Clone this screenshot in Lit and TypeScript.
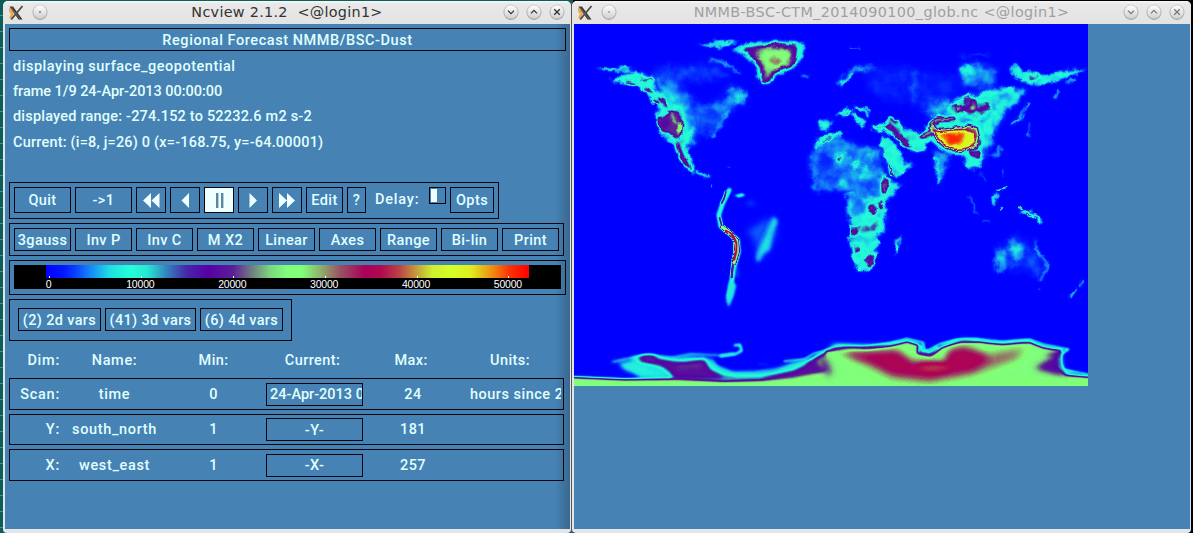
import { LitElement, html, svg, css } from "lit";
import { customElement, property } from "lit/decorators.js";

type Rgb = [number, number, number];

// "3gauss" colour map: position along the scale and its colour
const MAP: [number, Rgb][] = [
  [0, [0, 0, 255]], [0.035, [2, 22, 255]], [0.06, [10, 62, 255]], [0.085, [20, 120, 250]],
  [0.132, [30, 222, 228]], [0.174, [36, 255, 215]], [0.21, [38, 232, 210]], [0.25, [52, 130, 190]],
  [0.29, [70, 40, 170]], [0.335, [86, 0, 165]], [0.387, [92, 30, 150]], [0.42, [110, 110, 132]],
  [0.464, [124, 215, 125]], [0.5, [128, 255, 125]], [0.53, [130, 255, 118]], [0.567, [142, 180, 108]],
  [0.61, [152, 80, 100]], [0.66, [170, 0, 90]], [0.695, [176, 10, 80]], [0.733, [186, 70, 70]],
  [0.764, [196, 150, 60]], [0.8, [206, 240, 45]], [0.836, [212, 255, 40]], [0.878, [222, 240, 30]],
  [0.92, [236, 150, 20]], [0.96, [250, 50, 5]], [1, [255, 0, 0]],
];

function colorAt(v: number): Rgb {
  let i = 1;
  while (i < MAP.length - 1 && MAP[i][0] < v) i++;
  const [a, ca] = MAP[i - 1];
  const [b, cb] = MAP[i];
  const t = (v - a) / (b - a);
  return [0, 1, 2].map((k) => ca[k] + (cb[k] - ca[k]) * t) as Rgb;
}

const table = (ch: number) =>
  Array.from({ length: 65 }, (_, i) => (colorAt(i / 64)[ch] / 255).toFixed(3)).join(" ");

const GRADIENT = `linear-gradient(to right, ${MAP.map(
  ([p, c]) => `rgb(${c.join(",")}) ${(p * 100).toFixed(1)}%`
).join(", ")})`;

// A patch of terrain: height 0..1, blur class, path, and a stroke width for ridges
type Patch = [number, number, string, number?];
const dot = (x: number, y: number, rx: number, ry: number) =>
  `M${x - rx},${y}a${rx},${ry} 0 1,0 ${rx * 2},0a${rx},${ry} 0 1,0 ${-rx * 2},0Z`;

const NORTH_WEST: Patch[] = [
  [0.055, 12, "M230,200L420,190L480,230L350,250L260,240Z"],
  [0.085, 12, "M225,225L300,235L340,280L380,320L440,300L465,255L505,265L520,300L470,335L445,370L415,410L395,405L370,370L350,390L300,330Z"],
  [0.06, 12, "M340,330L440,330L420,390L360,420Z"],
  [0.125, 8, dot(490, 290, 32, 18)],
  [0.1, 4, "M465,335L440,370L410,408", 12],
  [0.15, 4, "M75,205L120,205L170,207L150,212L100,211Z", 6],
  [0.13, 5, "M405,178L440,185L470,200L495,220", 9],
  [0.15, 5, "M368,138L410,122L500,124L460,138L420,146L400,138Z"],
  [0.135, 10, "M230,225L290,270L330,310L356,350L362,430L340,440L300,330Z"],
  [0.175, 5, "M105,246L130,230L175,212L228,222L240,262L290,300L325,335L345,390L342,440L350,480L362,518L330,504L300,434L270,412L247,380L245,345L255,328L228,290L200,264L150,250Z"],
  [0.31, 4, "M160,248L180,250M205,234L226,240M215,268L236,274M235,302L248,310", 9],
  [0.37, 4, "M252,292L275,300L286,324L268,316Z"],
];

const NORTH_WEST_HIGH: Patch[] = [
  [0.39, 4, "M250,350L272,352L285,332L310,338L328,365L324,405L308,418L290,402L262,392L252,374Z"],
  [0.35, 4, dot(272, 372, 14, 14)],
  [0.47, 4, "M292,345L306,368M318,365L315,400", 8],
  [0.56, 3, dot(315, 385, 5, 10)],
  [0.36, 3, "M303,422L320,440L335,475L354,510L328,492L314,460Z"],
  [0.16, 3, "M368,514L385,524L405,532", 9],
  [0.09, 2, dot(412, 558, 4, 5)],
  [0.06, 2, dot(465, 502, 5, 3)],
  [0.17, 5, "M475,152L520,128L600,123L692,130L682,176L655,207L610,224L592,248L565,252L548,226L550,203L528,181L500,156Z", 3],
  [0.34, 4, "M512,146L600,132L668,142L660,192L605,212L586,245L564,243L560,203L537,174Z", 4],
  [0.47, 7, "M545,150L600,140L658,149L652,188L605,206L578,236L569,236L570,200L550,172Z"],
  [0.53, 7, "M562,160L600,152L645,158L635,190L600,202L578,212L572,180Z"],
  [0.6, 7, dot(606, 184, 18, 12)],
  [0.14, 3, "M684,228L702,228", 7],
];

const NORTH_EAST: Patch[] = [
  [0.04, 14, "M100,200L260,200L280,290L200,310L120,280Z"],
  [0.04, 14, "M230,210L390,230L390,300L250,330Z"],
  [0.065, 8, "M255,215L250,310", 14],
  [0.12, 7, "M32,250L60,222L85,204L125,203", 15],
  [0.17, 3, "M33,252L48,242L60,228", 9],
  [0.08, 2, "M60,142L88,142", 4],
  [0.06, 4, "M390,170L475,162", 8],
  [0.1, 12, "M385,195L440,190L500,205L490,265L400,262Z"],
  [0.15, 8, "M388,200L425,196L428,222L395,220Z"],
  [0.15, 6, "M540,200L562,195L580,210L640,222L700,212L772,208L700,238L650,252L600,258L545,226Z"],
  [0.17, 4, "M548,212L600,250L650,246", 6],
  [0.28, 6, dot(608, 236, 16, 8)],
  [0.13, 4, "M735,240L710,248M690,272L674,292", 9],
  [0.1, 12, "M280,310L340,300L370,310L360,350L300,360Z"],
  [0.135, 9, "M460,275L520,262L590,270L560,310L530,330L500,390L478,440L465,480L440,500L420,498L400,460L380,400L300,380L330,345L340,320L360,310L400,290Z"],
  [0.18, 6, "M440,300L480,280L540,272M470,350L500,330L520,310M475,360L480,400", 14],
  [0.12, 4, "M597,308L575,345L545,370", 10],
  [0.11, 3, "M600,372L598,400L585,404", 7],
  [0.11, 5, "M510,440L505,465L480,468", 11],
  [0.2, 5, "M355,318L415,288L450,298L485,320L462,352L405,352L370,342Z", 4],
  [0.36, 3, "M368,314L388,320L410,322L402,300L420,294L436,300L446,328L430,342L405,338L385,334Z", 3],
  [0.42, 3, dot(424, 325, 7, 6)],
  [0.32, 5, "M450,335L475,318", 13],
  [0.1, 8, "M312,445L362,460L350,500L332,560L314,510Z"],
  [0.15, 4, "M320,470L325,520L332,545", 8],
  [0.17, 7, "M395,455L450,465L448,500L425,508L400,480Z"],
  [0.09, 4, "M455,520L465,545M518,512L520,526M500,575L492,600", 6],
];

// Europe, the Middle East and Africa
const AFRICA: Patch[] = [
  [0.12, 6, "M85,80L108,70L128,80L118,107L92,107Z", 3],
  [0.16, 5, dot(103, 88, 13, 12)],
  [0.15, 5, "M135,62L150,48L180,42L186,52L160,62Z", 3],
  [0.3, 4, "M148,58L178,49", 7],
  [0.14, 4, "M195,42L222,38L232,58M190,60L205,78L218,92L222,78L210,72", 11],
  [0.19, 5, "M242,98L262,86L290,88L296,68L322,74L332,92L350,110L372,106L400,120L415,120L405,165L370,168L340,155L312,118L262,110Z"],
  [0.24, 3, "M255,98L280,95", 8],
  [0.085, 9, "M80,130L140,118L160,125L200,150L240,152L268,160L285,235L300,265L280,290L240,310L170,300L140,285L75,292L60,240L60,180Z"],
  [0.055, 9, "M95,170L130,190L120,270L80,250Z"],
  [0.14, 8, dot(155, 190, 20, 18) + dot(225, 235, 13, 24) + dot(160, 265, 9, 14)],
  [0.13, 6, dot(238, 185, 10, 18) + dot(200, 205, 16, 14) + dot(75, 268, 8, 8)],
  [0.15, 4, "M165,292L185,290L195,300L172,302Z"],
  [0.26, 4, dot(152, 186, 9, 7)],
  [0.26, 3, dot(198, 205, 5, 5)],
  [0.17, 4, "M85,150L95,128L125,122L155,118", 10],
  [0.3, 3, "M94,144L108,134L126,126", 6],
  [0.16, 6, "M275,122L300,128L318,150L345,205L375,200L350,225L320,248L300,235L285,200L270,150Z", 0],
  [0.2, 3, "M276,150L292,195L304,222", 5],
  [0.32, 2, "M302,210L312,240", 7],
  [0.19, 4, "M314,246L340,232", 5],
  [0.17, 7, "M270,245L288,240L308,268L336,266L310,295L285,325L288,400L262,430L255,495L230,528L207,530L185,470L180,430L185,390L172,330L168,300L250,310L275,290Z"],
  [0.09, 9, dot(203, 330, 26, 30)],
  [0.19, 3, "M184,395L180,435L192,470L208,528L232,526L252,505L255,470M286,325L282,350", 5],
  [0.35, 6, dot(193, 407, 10, 13) + dot(198, 462, 6, 11) + dot(238, 498, 13, 18)],
  [0.27, 7, "M225,402L250,398L262,375", 14],
  [0.36, 5, dot(249, 342, 8, 15) + dot(274, 334, 7, 15)],
  [0.22, 3, "M240,448L258,436L262,445", 5],
  [0.16, 4, "M313,475L318,440L332,415L326,455L320,475Z", 3],
];

const HIGH_ASIA: Patch[] = [
  [0.38, 3, "M282,96L300,86L325,112L340,125L366,158L348,156L325,140L312,110Z"],
  [0.36, 3, "M300,68L318,84", 7],
  [0.4, 4, "M286,248L296,275L288,298L276,292L275,268Z", 2],
  [0.18, 4, "M390,118L425,75L465,62L500,66L510,85L550,78L580,110L578,150L572,190L545,198L525,180L490,180L450,160L420,140L400,150L388,132Z"],
  [0.46, 3, "M396,124L418,118L430,98L424,84L445,74L490,72", 12],
  [0.52, 3, "M420,96L450,106L490,98L530,92L560,98L568,134L565,156L540,162L520,166L495,170L465,156L445,140Z"],
  [0.86, 5, "M424,96L450,112L492,106L525,102L550,112L558,138L546,155L520,162L490,164L465,150L442,124Z"],
  [0.97, 8, "M445,112L490,112L525,118L512,148L480,150Z"],
  [0.65, 3, "M530,98L552,102L562,128", 8],
  [0.38, 4, "M540,168L572,168L564,190L550,186Z", 3],
];

const SOUTH_WEST: Patch[] = [
  [0.18, 3, "M466,0L446,40L434,75L440,108L462,126L490,148L494,185L482,225L476,260L470,290L464,320", 14],
  [0.33, 2, "M455,5L450,25L442,40M437,84L444,108", 6],
  [0.5, 2, "M446,112L468,128L488,152L490,185L480,218", 13],
  [0.69, 1, "M455,124L474,134L485,158L485,185L479,208", 9],
  [0.8, 1, "M462,128L470,136M483,162L482,182", 4],
  [0.38, 2, "M476,224L472,262", 7],
  [0.15, 5, "M468,270L486,285L478,318L464,350L457,330Z", 4],
  [0.08, 5, "M490,235L492,262", 8],
  [0.19, 3, "M482,16L505,10L514,16L495,22Z", 2],
  [0.055, 8, dot(530, 40, 18, 10)],
  [0.07, 12, "M515,125L560,95L600,80L610,130L580,190L550,215L540,150Z", 8],
  [0.14, 7, "M598,78L614,92L596,130L588,180L568,190L555,218L545,212L548,195L560,165L575,135Z"],
  [0.13, 9, "M160,512L300,505L400,510L430,530L480,550L600,545L660,515L780,500L780,580L200,560Z"],
  [0.15, 5, "M115,516L170,504L220,497L300,502L350,492L440,496L480,490", 7],
  [0.16, 9, "M130,518L175,512L240,540L300,556L260,520L340,500L400,505L430,540L490,562L400,566L200,560L150,540Z"],
  [0.36, 8, "M170,504L230,498L290,512L330,520L392,510L408,538L450,558L560,560L660,540L760,480L790,480L790,570L300,566L290,548L265,530Z"],
  [0.41, 9, "M315,530L380,524M205,506L240,506", 13],
  [0.17, 7, "M412,510L425,532L470,550L540,550L620,538L690,520", 10],
  [0.17, 3, "M630,514L690,508L720,490L780,478", 6],
  [0.17, 4, "M440,498L485,492L503,482L498,464L482,466", 9],
  [0.05, 3, "M555,523L580,523", 7],
  [0.51, 5, "M-20,560L150,568L300,566L450,572L560,570L660,562L740,548L800,530L800,620L-20,620Z"],
  [0.48, 8, "M780,482L745,502L725,515L745,535L800,520L800,482Z"],
];

const ISLANDS: Patch[] = [
  [0.13, 3, "M415,18L428,42L444,74M460,92L480,94", 5],
  [0.14, 4, "M496,15L488,44", 12],
  [0.15, 2, "M510,66L517,56M568,50L574,58M505,0L530,-5", 6],
  [0.19, 3, "M582,66L605,73L622,84L630,96", 13],
  [0.27, 2, "M590,70L602,73M610,80L622,86", 4],
  [0.055, 12, "M495,180L560,130L600,160L650,220L630,270L590,240L500,240Z"],
  [0.115, 8, "M497,178L530,182L522,245L500,245Z", 3],
  [0.125, 8, "M545,140L578,175L570,208L545,195Z", 3],
  [0.12, 4, "M615,150L620,180L648,215L646,245L632,268", 7],
  [0.06, 2, dot(628, 300, 4, 4)],
  [0.14, 3, "M755,280L750,286M738,300L722,320", 7],
];

const SOUTH_POLE: Patch[] = [
  [0.17, 3, "M0,480L100,474L180,460L230,446L280,458L285,485L330,462L380,450L440,447L520,455L600,449L640,463L716,478L690,496L690,520L700,540L775,553", 7],
  [0.5, 6, "M-12,484L100,484L180,470L230,454L266,464L262,490L300,500L335,472L390,458L450,455L520,463L600,457L640,472L700,482L680,496L676,530L710,554L790,562L790,620L-12,620Z"],
  [0.34, 11, "M610,535L690,490L696,545L740,556L690,556Z"],
  [0.36, 8, "M640,495L690,482L690,505Z"],
  [0.34, 5, "M272,468L272,490L300,494L322,474", 7],
  [0.56, 14, "M10,478L110,482L210,478L240,505L345,508L360,478L400,464L440,472L470,490L590,470L570,505L430,560L300,582L180,570L90,525Z", 12],
  [0.61, 12, "M30,484L110,488L200,484L245,518L345,520L360,484L400,474L440,488L470,502L570,482L555,500L430,545L300,570L190,558L115,518Z"],
  [0.68, 12, "M40,488L110,492L200,488L245,522L345,524L362,486L400,478L440,490L480,504L430,538L300,562L190,550L120,515Z"],
  [0.76, 11, dot(310, 532, 50, 8)],
  [0.38, 12, "M-20,515L-5,545", 26],
  [0.56, 9, "M450,576L780,576", 8],
];

const patches = (list: Patch[]) =>
  list.map(([h, blur, d, w]) => {
    const g = Math.round(h * 255);
    const c = `rgb(${g},${g},${g})`;
    const fill = w && !d.endsWith("Z") ? "none" : c;
    return svg`<path class="b${blur}" d=${d} fill=${fill} stroke=${w ? c : "none"} stroke-width=${w ?? 0} stroke-linecap="round" stroke-linejoin="round"></path>`;
  });

@customElement("geo-map")
class GeoMap extends LitElement {
  static styles = css`
    :host { display: block; width: 514px; height: 362px; }
    svg { display: block; overflow: hidden; }
    .b1 { filter: blur(1px); }
    .b2 { filter: blur(1.7px); }
    .b3 { filter: blur(2.5px); }
    .b4 { filter: blur(3.2px); }
    .b5 { filter: blur(4px); }
    .b6 { filter: blur(5px); }
    .b7 { filter: blur(6px); }
    .b8 { filter: blur(7px); }
    .b9 { filter: blur(8px); }
    .b10 { filter: blur(9px); }
    .b11 { filter: blur(10px); }
    .b12 { filter: blur(11px); }
    .b14 { filter: blur(13px); }
  `;
  render() {
    return html`<svg width="514" height="362" viewBox="0 0 514 362">
      <defs>
        <filter id="rough" filterUnits="userSpaceOnUse" x="0" y="0" width="514" height="362" color-interpolation-filters="sRGB">
          <feTurbulence type="fractalNoise" baseFrequency="0.13" numOctaves="2" seed="4" result="w"></feTurbulence>
          <feDisplacementMap in="SourceGraphic" in2="w" scale="8" xChannelSelector="R" yChannelSelector="G" result="d"></feDisplacementMap>
          <feTurbulence type="fractalNoise" baseFrequency="0.09" numOctaves="2" seed="7"></feTurbulence>
          <feColorMatrix type="matrix" values="2 0 0 0 -.5  2 0 0 0 -.5  2 0 0 0 -.5  0 0 0 0 1" result="n"></feColorMatrix>
          <feComposite in="d" in2="n" operator="arithmetic" k1="0.5" k2="0.75" k3="0" k4="0"></feComposite>
        </filter>
        <filter id="coast" filterUnits="userSpaceOnUse" x="0" y="0" width="514" height="362" color-interpolation-filters="sRGB">
          <feTurbulence type="fractalNoise" baseFrequency="0.13" numOctaves="2" seed="4" result="w"></feTurbulence>
          <feDisplacementMap in="SourceGraphic" in2="w" scale="5" xChannelSelector="R" yChannelSelector="G"></feDisplacementMap>
        </filter>
        <filter id="cmap" filterUnits="userSpaceOnUse" x="0" y="0" width="514" height="362" color-interpolation-filters="sRGB">
          <feComponentTransfer>
            <feFuncR type="table" tableValues=${table(0)}></feFuncR>
            <feFuncG type="table" tableValues=${table(1)}></feFuncG>
            <feFuncB type="table" tableValues=${table(2)}></feFuncB>
          </feComponentTransfer>
        </filter>
      </defs>
      <g filter="url(#cmap)">
        <rect width="514" height="362" fill="#000"></rect>
        <g filter="url(#rough)">
          <rect width="514" height="362" fill="#000"></rect>
          <g transform="translate(0 -24) scale(.33333)">${patches(NORTH_WEST)}</g>
          <g transform="translate(256 -24) scale(.33333)">${patches(NORTH_EAST)}</g>
          <g transform="translate(216 71) scale(.33333)">${patches(AFRICA)}</g>
          <g transform="translate(256 166) scale(.33333)">${patches(ISLANDS)}</g>
        </g>
        <g filter="url(#coast)">
          <g transform="translate(0 -24) scale(.33333)">${patches(NORTH_WEST_HIGH)}</g>
          <g transform="translate(216 71) scale(.33333)">${patches(HIGH_ASIA)}</g>
        </g>
        <g transform="translate(0 166) scale(.33333)">${patches(SOUTH_WEST)}</g>
        <g transform="translate(256 166) scale(.33333)">${patches(SOUTH_POLE)}</g>
      </g>
    </svg>`;
  }
}

@customElement("window-frame")
class WindowFrame extends LitElement {
  @property() caption = "";
  @property({ type: Boolean, reflect: true }) inactive = false;
  static styles = css`
    :host { display: flex; flex-direction: column; box-sizing: border-box; height: 532px; background: #e4e5e6; border-radius: 5px 5px 4px 4px; }
    .bar { display: grid; grid-template-columns: 1fr auto 1fr; align-items: center; height: 23px; flex: none;
      background: linear-gradient(#f8f8f8 0, #e8e8e8 12%, #e3e3e3 100%); border-radius: 5px 5px 0 0; }
    .left, .right { display: flex; align-items: center; }
    .left { padding-left: 5px; gap: 8px; }
    .right { justify-content: flex-end; gap: 7px; padding-right: 6px; }
    .title { font: 14.4px/20px "DejaVu Sans", sans-serif; letter-spacing: .28px; color: #333; white-space: pre; margin-top: -2px; }
    :host([inactive]) .title { color: #a0a0a0; letter-spacing: .35px; }
    :host([inactive]) .btn path { stroke: #777; }
    .btn { display: block; width: 16px; height: 17px; }
    .body { flex: 1; margin: 0 1px 4px 2px; background: #4682b4; overflow: hidden; }
  `;
  button(d: string) {
    return html`<svg class="btn" viewBox="0 0 16 17">
      <defs><linearGradient id="g" x1="0" y1="0" x2="0" y2="1"><stop offset="0" stop-color="#fff"></stop><stop offset="1" stop-color="#cfcfcf"></stop></linearGradient></defs>
      <circle cx="8" cy="8.6" r="7.4" fill="#a2a2a2"></circle>
      <circle cx="8" cy="7.9" r="6.9" fill="url(#g)" stroke="#bdbdbd" stroke-width=".6"></circle>
      <path d=${d} fill="none" stroke="#333" stroke-width="1.3"></path>
    </svg>`;
  }
  render() {
    return html`<div class="bar">
        <div class="left">
          <svg width="16" height="16" viewBox="0 0 16 16">
            <path d="M2 2C0 5 1 7 3 9L1 13L4 14L6 8Z" fill="#f0a850"></path>
            <path d="M10 9L14 14L12 15L8 11Z" fill="#e0b060"></path>
            <path d="M1.5 1.5H5L14.5 14.5H10.5Z" fill="#3c3a38"></path>
            <path d="M14.5 1L3.2 14.5" stroke="#4d4a46" stroke-width="1.8"></path>
            <path d="M3 2.5L12 14" stroke="#777" stroke-width=".8"></path>
          </svg>
          ${this.button("M7.4 8H8.6")}
        </div>
        <div class="title">${this.caption}</div>
        <div class="right">
          ${this.button("M5 6.6L8 9.6L11 6.6")}
          ${this.button("M5 9.4L8 6.4L11 9.4")}
          ${this.button("M5.2 5.2L10.8 10.8M10.8 5.2L5.2 10.8")}
        </div>
      </div>
      <div class="body"><slot></slot></div>`;
  }
}

const ICONS: Record<string, string> = {
  rewind: "M8 0V15L0 7.5ZM16.5 0V15L8.5 7.5Z",
  back: "M12 0V15L4.5 7.5Z",
  pause: "M5 0H7.4V15H5ZM10 0H12.4V15H10Z",
  play: "M4.5 0V15L12 7.5Z",
  forward: "M0 0V15L8 7.5ZM8 0V15L16 7.5Z",
};

@customElement("ncview-panel")
class NcviewPanel extends LitElement {
  static styles = css`
    :host { display: flex; flex-direction: column; align-items: flex-start; box-sizing: border-box; height: 505px; padding: 4px 0 0 4px;
      font: 500 14.5px/18px "Roboto", sans-serif; letter-spacing: .4px; color: #e0ffff;
      background: linear-gradient(to right, transparent 550px, rgba(30, 50, 70, .35) 566px); }
    .box { border: 1px solid #06060f; box-sizing: border-box; display: flex; white-space: nowrap; }
    .head { width: 557px; height: 23px; align-items: center; justify-content: center; letter-spacing: .56px; padding-top: 2px; }
    .info { display: grid; grid-template-rows: repeat(4, 25.3px); align-items: center; height: 101px; padding: 3px 0 27px 4px; white-space: pre; letter-spacing: .2px; }
    .info .name { letter-spacing: .52px; }
    .info .frame { letter-spacing: -.04px; }
    .btn { align-items: center; justify-content: center; flex: none; height: 23px; width: 57px; }
    .opts .btn, .vars .btn { padding-top: 2px; }
    .play .btn.txt { padding-top: 1px; }
    .row { gap: 4px; padding: 4px; }
    .play { height: 37px; }
    .play .btn { height: 26px; }
    .btn.icon { width: 30px; }
    .btn.on { background: #f0ffff; }
    .btn.icon svg { fill: #f0ffff; }
    .btn.on svg { fill: #5c86a4; }
    .btn.w37 { width: 37px; }
    .btn.w19 { width: 19px; }
    .btn.w44 { width: 44px; }
    .delay { width: 55px; padding: 4px 0 0 5px; box-sizing: border-box; letter-spacing: .8px; }
    .play .btn.knob { width: 17px; height: 17px; justify-content: flex-start; }
    .knob i { width: 6px; height: 13px; background: #f0ffff; margin-left: 1px; }
    .opts { height: 33px; margin-top: 4px; width: 555px; }
    .scale { height: 35px; width: 557px; margin-top: 4px; padding: 4px; }
    .black { background: #000; width: 547px; height: 24px; }
    .ramp { width: 483px; height: 13px; margin-left: 32px; }
    .ticks { display: grid; grid-template-columns: repeat(6, 91.9px); margin-left: -11.5px; margin-top: -2px; color: #fff; font: 10.5px/12px "Liberation Sans", sans-serif; letter-spacing: -.2px; text-align: center; }
    .ticks div::before { content: ""; display: block; width: 1px; height: 2px; background: #fff; margin: 0 auto; position: relative; left: 1px; }
    .vars { height: 42px; margin-top: 4px; padding: 8px; gap: 4px; width: 283px; letter-spacing: .35px; }
    .vars .btn { width: 83px; }
    .vars .btn.wide { width: 91px; }
    .dim { display: grid; grid-template-columns: 50px 109px 97px 97px 100px 98px; align-items: center; width: 555px; box-sizing: border-box; padding: 2px 0 0 1px; text-align: center; white-space: nowrap; }
    .dim > :first-child { text-align: right; letter-spacing: .75px; }
    .dim > :nth-child(2) { letter-spacing: .65px; }
    .dim > :nth-child(3) { padding-right: 8px; }
    .dim.labels { height: 37px; }
    .dim.labels > :nth-child(n + 4) { padding-right: 4px; }
    .dim.line { height: 32px; border: 1px solid #06060f; padding: 0; margin-bottom: 4px; }
    .dim.line > :not(.box) { padding-top: 1px; }
    .dim.line.short { height: 31px; }
    .dim .btn { width: 97px; overflow: hidden; padding-top: 2px; }
    .dim .btn.long { justify-content: flex-start; padding-left: 3px; letter-spacing: 0; }
    .units { text-align: left; padding-left: 7px; overflow: hidden; letter-spacing: .5px; }
  `;
  icon(name: string, on = false) {
    return html`<div class="box btn icon ${on ? "on" : ""}"><svg width="17" height="15" viewBox="0 0 17 15"><path d=${ICONS[name]}></path></svg></div>`;
  }
  render() {
    return html`
      <div class="box head">Regional Forecast NMMB/BSC-Dust</div>
      <div class="info"><div class="name">displaying surface_geopotential</div><div class="frame">frame 1/9 24-Apr-2013 00:00:00</div><div>displayed range: -274.152 to 52232.6 m2 s-2</div><div>Current: (i=8, j=26) 0 (x=-168.75, y=-64.00001)</div></div>
      <div class="box row play">
        <div class="box btn txt">Quit</div><div class="box btn txt">-&gt;1</div>
        ${this.icon("rewind")}${this.icon("back")}${this.icon("pause", true)}${this.icon("play")}${this.icon("forward")}
        <div class="box btn txt w37">Edit</div><div class="box btn txt w19">?</div>
        <div class="delay">Delay:</div><div class="box btn knob"><i></i></div>
        <div class="box btn txt w44">Opts</div>
      </div>
      <div class="box row opts">
        ${["3gauss", "Inv P", "Inv C", "M X2", "Linear", "Axes", "Range", "Bi-lin", "Print"].map((t) => html`<div class="box btn">${t}</div>`)}
      </div>
      <div class="box scale"><div class="black">
        <div class="ramp" style="background:${GRADIENT}"></div>
        <div class="ticks">${[0, 10000, 20000, 30000, 40000, 50000].map((n) => html`<div>${n}</div>`)}</div>
      </div></div>
      <div class="box vars">
        <div class="box btn">(2) 2d vars</div><div class="box btn wide">(41) 3d vars</div><div class="box btn">(6) 4d vars</div>
      </div>
      <div class="dim labels"><div>Dim:</div><div>Name:</div><div>Min:</div><div>Current:</div><div>Max:</div><div>Units:</div></div>
      <div class="dim line"><div>Scan:</div><div>time</div><div>0</div><div class="box btn long">24-Apr-2013 0</div><div>24</div><div class="units">hours since 2</div></div>
      <div class="dim line short"><div>Y:</div><div>south_north</div><div>1</div><div class="box btn">-Y-</div><div>181</div><div></div></div>
      <div class="dim line"><div>X:</div><div>west_east</div><div>1</div><div class="box btn">-X-</div><div>257</div><div></div></div>
    `;
  }
}

@customElement("app-root")
class AppRoot extends LitElement {
  static styles = css`
    :host { display: flex; box-sizing: border-box; width: 1193px; height: 533px; padding: 1px 0 0 3px; overflow: hidden;
      background:
        linear-gradient(to right, transparent 573px, #000 573px),
        repeating-linear-gradient(#0b5f58 0 15px, #4a9088 15px 16px); }
    .control { width: 568px; }
    .gap { width: 1px; background: #555; }
    .plot { width: 619px; }
  `;
  render() {
    return html`
      <window-frame class="control" caption="Ncview 2.1.2  &lt;@login1&gt;"><ncview-panel></ncview-panel></window-frame>
      <div class="gap"></div>
      <window-frame class="plot" inactive caption="NMMB-BSC-CTM_2014090100_glob.nc &lt;@login1&gt;"><geo-map></geo-map></window-frame>
    `;
  }
}
